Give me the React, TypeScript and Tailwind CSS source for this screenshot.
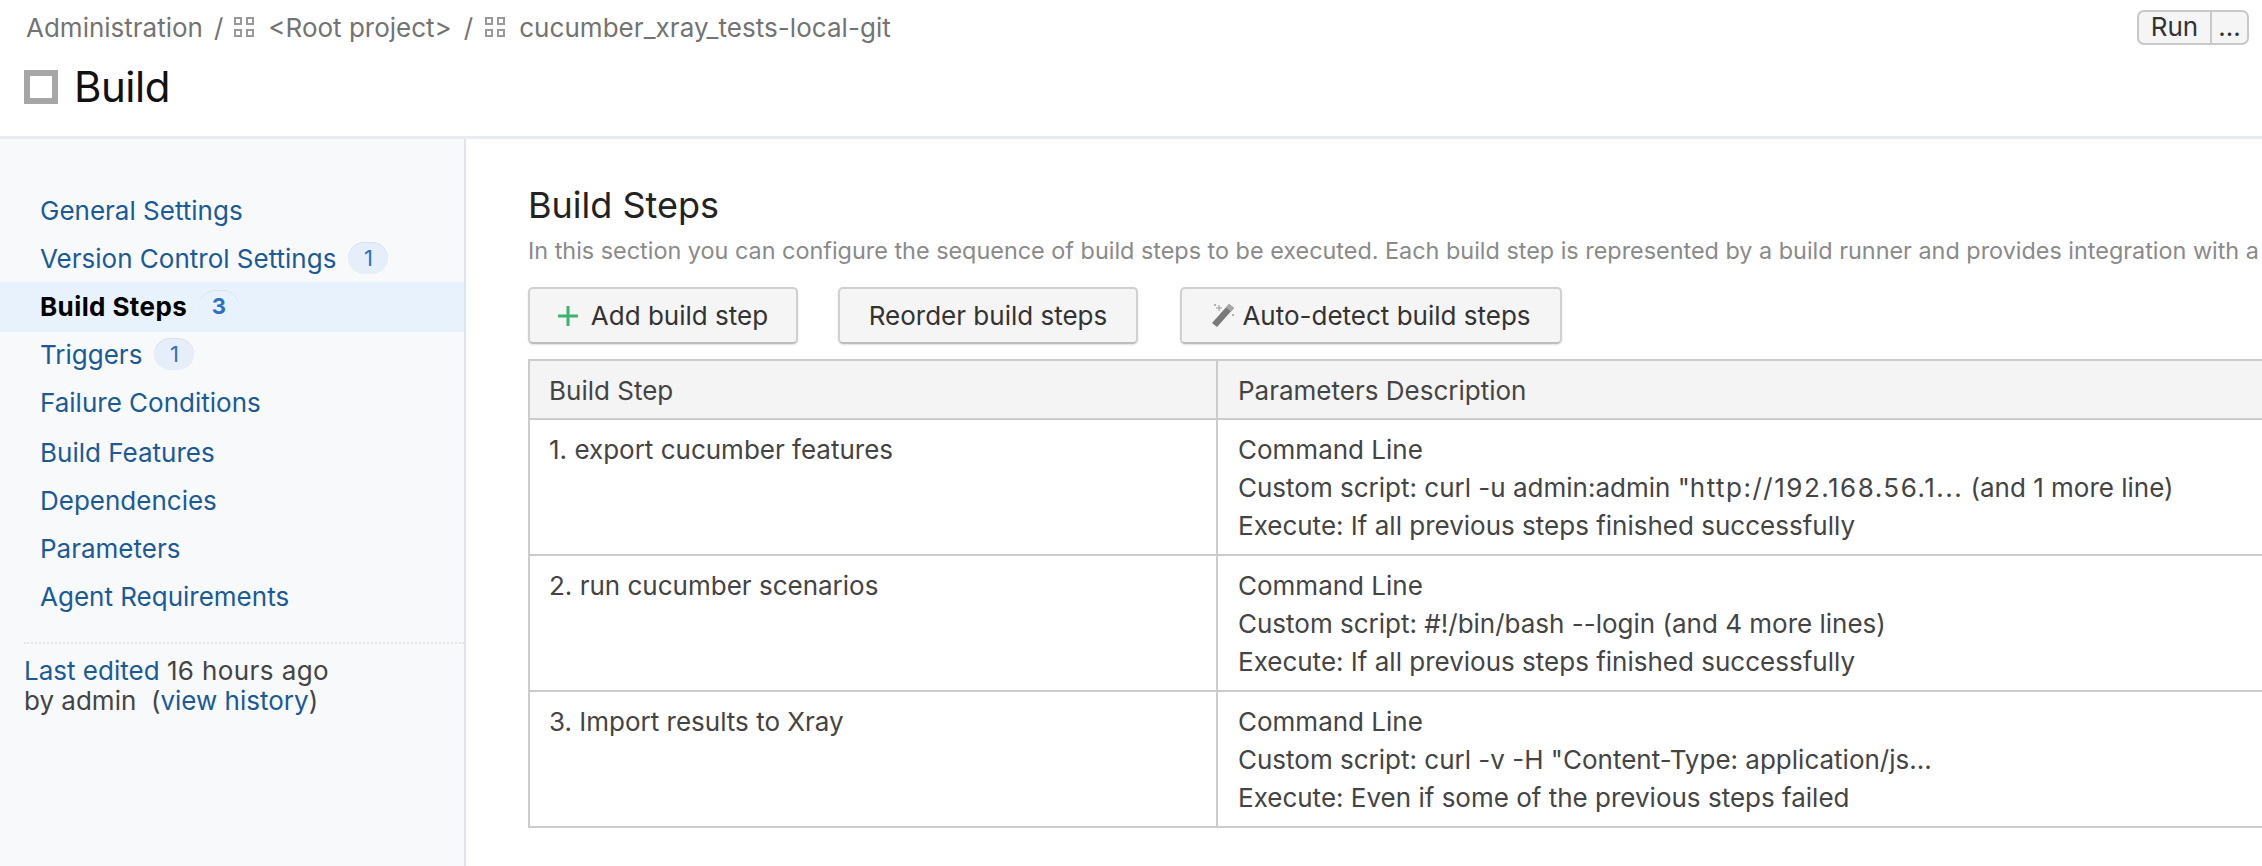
import { Fragment, type ReactNode } from "react";

const NAV_ITEMS = [
    { label: "General Settings" },
    { label: "Version Control Settings", count: 1 },
    { label: "Build Steps", count: 3, active: true },
    { label: "Triggers", count: 1 },
    { label: "Failure Conditions" },
    { label: "Build Features", pushed: true },
    { label: "Dependencies" },
    { label: "Parameters" },
    { label: "Agent Requirements" },
];

const STEPS: { name: string; script: ReactNode; execute: string }[] = [
    {
        name: "1. export cucumber features",
        script: (
            <>
                Custom script: curl -u admin:admin "<span className="tracking-[1.5px]">http://192.168.56.1...</span> (and 1 more line)
            </>
        ),
        execute: "Execute: If all previous steps finished successfully",
    },
    {
        name: "2. run cucumber scenarios",
        script: "Custom script: #!/bin/bash --login (and 4 more lines)",
        execute: "Execute: If all previous steps finished successfully",
    },
    {
        name: "3. Import results to Xray",
        script: 'Custom script: curl -v -H "Content-Type: application/js...',
        execute: "Execute: Even if some of the previous steps failed",
    },
];

const ProjectIcon = () => (
    <svg width="20" height="20" viewBox="0 0 20 20" className="shrink-0" fill="none" stroke="#999" strokeWidth="2">
        <rect x="1" y="1" width="6" height="6" />
        <rect x="13" y="1" width="6" height="6" />
        <rect x="1" y="13" width="6" height="6" />
        <rect x="13" y="13" width="6" height="6" />
    </svg>
);

const PlusIcon = () => (
    <svg width="20" height="20" viewBox="0 0 20 20" className="shrink-0" fill="none" stroke="#3cb371" strokeWidth="3">
        <path d="M10 0v20M0 10h20" />
    </svg>
);

const WandIcon = () => (
    <svg width="24" height="26" viewBox="0 0 24 26" className="shrink-0">
        <path d="M18 1l5 4L6 24l-5-4z" fill="#7a7a7a" />
        <path d="M18 1l5 4-3 3.500-5-4z" fill="#a8a8a8" />
        <path d="M8 2v6M5 5h6M4 1v2M3 2h2M22 11v2M21 12h2" stroke="#999" strokeWidth="1" fill="none" />
    </svg>
);

const Button = ({ children, className = "" }: { children: ReactNode; className?: string }) => (
    <button className={`h-[57px] flex items-center justify-center bg-[#f5f5f5] border-2 border-[#d0d0d0] border-b-[#bdbdbd] rounded-[5px] text-[26px] text-[#333] shadow-[0_1px_2px_rgba(0,0,0,0.12)] ${className}`}>
        {children}
    </button>
);

export default function App() {
    return (
        <div className="h-[866px] w-[2262px] overflow-hidden bg-white flex flex-col font-['Inter','Liberation_Sans',sans-serif]">
            <header className="h-[139px] shrink-0 border-b-[3px] border-[#e8ebf1] pl-[24px] pr-[13px]">
                <div className="flex items-center justify-between pt-[8px]">
                    <div className="flex items-center text-[26px] text-[#737373] h-[38px] pl-[2px]">
                        <span>Administration</span>
                        <span className="mx-[11px]">/</span>
                        <ProjectIcon />
                        <span className="ml-[14px]">&lt;Root project&gt;</span>
                        <span className="mx-[12px]">/</span>
                        <ProjectIcon />
                        <span className="ml-[14px] tracking-[0.05px]">cucumber_xray_tests-local-git</span>
                    </div>
                    <div className="flex h-[35px] w-[112px] bg-[#f5f5f5] border-2 border-[#c8c8c8] rounded-[7px] text-[26px] text-[#333]">
                        <span className="w-[73px] pb-[2px] flex items-center justify-center border-r-2 border-[#c8c8c8]">Run</span>
                        <span className="flex-1 pb-[2px] flex items-center justify-center">...</span>
                    </div>
                </div>
                <div className="flex items-center mt-[24px] h-[34px]">
                    <div className="w-[34px] h-[34px] border-[6px] border-[#a6a6a6]" />
                    <h1 className="ml-[16px] -mt-[2px] text-[42px] text-[#111] tracking-[-0.5px]">Build</h1>
                </div>
            </header>
            <div className="flex flex-1 min-h-0">
                <aside className="w-[466px] shrink-0 bg-[#f8f9fb] border-r-2 border-[#dfe4ee] pt-[48px]">
                    <nav className="flex flex-col">
                        {NAV_ITEMS.map((item) => (
                            <div
                                key={item.label}
                                className={`flex items-center pl-[40px] pb-[2px] text-[26px] ${
                                    item.active ? "h-[50px] -my-[1px] bg-[#e8f2fc] font-bold tracking-[0.4px] text-black" : "h-[48px] text-[#1b5a96]"
                                } ${item.pushed ? "mt-[2px]" : ""}`}
                            >
                                <span>{item.label}</span>
                                {item.count !== undefined && (
                                    <span
                                        className={`ml-[12px] h-[32px] w-[40px] rounded-full text-[#2f6fc4] text-[22px] flex items-center justify-center shadow-[inset_0_1px_1px_rgba(0,0,0,0.06)] ${
                                            item.active ? "bg-[#e8f2fc] font-bold" : "bg-[#e6eef9] font-normal"
                                        }`}
                                    >
                                        {item.count}
                                    </span>
                                )}
                            </div>
                        ))}
                    </nav>
                    <div className="mt-[21px] ml-[24px] border-t-2 border-dotted border-[#e4e6ea] pt-[12px] text-[26px] leading-[30px] text-[#444]">
                        <div><span className="text-[#1b5a96]">Last edited</span> <span className="tracking-[0.4px]">16 hours ago</span></div>
                        <div>by admin&nbsp;&nbsp;(<span className="text-[#1b5a96]">view history</span>)</div>
                    </div>
                </aside>
                <main className="flex-1 min-w-0 overflow-hidden pl-[62px] pt-[46px]">
                    <h2 className="text-[36px] leading-[40px] text-[#222]">Build Steps</h2>
                    <p className="mt-[12px] text-[23.4px] leading-[28px] text-[#8a8a8a] whitespace-nowrap">
                        In this section you can configure the sequence of build steps to be executed. Each build step is represented by a build runner and provides integration with a
                    </p>
                    <div className="flex mt-[22px] gap-[40px]">
                        <Button className="w-[270px]">
                            <PlusIcon />
                            <span className="ml-[13px]">Add build step</span>
                        </Button>
                        <Button className="w-[300px]">Reorder build steps</Button>
                        <Button className="w-[382px] ml-[2px]">
                            <WandIcon />
                            <span className="ml-[7px]">Auto-detect build steps</span>
                        </Button>
                    </div>
                    <div className="mt-[15px] w-[2000px] grid grid-cols-[688px_1fr] border-2 border-[#cccccc] text-[26px] text-[#444]">
                        <div className="h-[59px] bg-[#f4f4f4] border-b-2 border-r-2 border-[#cccccc] pl-[19px] pt-[2px] flex items-center">Build Step</div>
                        <div className="h-[59px] bg-[#f4f4f4] border-b-2 border-[#cccccc] pl-[20px] pt-[2px] flex items-center">Parameters Description</div>
                        {STEPS.map((step, i) => (
                            <Fragment key={step.name}>
                                <div className={`border-r-2 border-[#cccccc] pl-[19px] pt-[11px] leading-[38px] ${i < 2 ? "h-[136px] border-b-2" : "h-[134px]"}`}>{step.name}</div>
                                <div className={`border-[#cccccc] pl-[20px] pt-[11px] leading-[38px] ${i < 2 ? "h-[136px] border-b-2" : "h-[134px]"}`}>
                                    <div>Command Line</div>
                                    <div>{step.script}</div>
                                    <div>{step.execute}</div>
                                </div>
                            </Fragment>
                        ))}
                    </div>
                </main>
            </div>
        </div>
    );
}
